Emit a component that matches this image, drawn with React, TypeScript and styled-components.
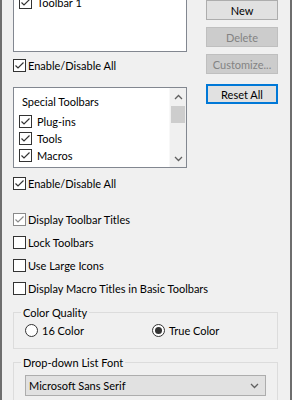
import React from 'react';
import styled, { createGlobalStyle } from 'styled-components';

const Global = createGlobalStyle`
  html, body { margin: 0; padding: 0; background: #f0f0f0; }
  body { font-family: Lato, 'Liberation Sans', sans-serif; font-size: 11px; color: #000; }
  * { box-sizing: border-box; }
`;

const Check = ({ grey }: { grey?: boolean }) => (
  <svg width="11" height="11" viewBox="0 0 11 11">
    <path d="M1.5 5.5 L4 8 L9.5 2.5" fill="none" stroke={grey ? '#8a8a8a' : '#333'} strokeWidth="1.2" />
  </svg>
);

function CheckBox({ checked, grey, label, inList }: { checked?: boolean; grey?: boolean; label: string; inList?: boolean }) {
  return (
    <Row $inList={inList}>
      <Box $grey={grey}>{checked && <Check grey={grey} />}</Box>
      <span>{label}</span>
    </Row>
  );
}

function Radio({ checked, label }: { checked?: boolean; label: string }) {
  return (
    <RadioRow>
      <Circle>{checked && <Dot />}</Circle>
      <span>{label}</span>
    </RadioRow>
  );
}

const Chevron = ({ up }: { up?: boolean }) => (
  <svg width="9" height="6" viewBox="0 0 9 6">
    <path d={up ? 'M1 5 L4.5 1.5 L8 5' : 'M1 1 L4.5 4.5 L8 1'} fill="none" stroke="#606060" strokeWidth="1.3" />
  </svg>
);

export default function App() {
  return (
    <>
      <Global />
      <Window>
        <Top>
          <LeftCol>
            <ListBox $height={84}>
              <ListItems>
                <ListHeader>Toolbars</ListHeader>
                <CheckBox checked inList label="Toolbar 1" />
              </ListItems>
            </ListBox>
            <Spacer $h={7} />
            <CheckBox checked label="Enable/Disable All" />
            <Spacer $h={15} />
            <ListBox $height={81}>
              <ListItems>
                <ListHeader>Special Toolbars</ListHeader>
                <CheckBox checked inList label="Plug-ins" />
                <CheckBox checked inList label="Tools" />
                <CheckBox checked inList label="Macros" />
              </ListItems>
              <ScrollBar>
                <Arrow><Chevron up /></Arrow>
                <Thumb />
                <Track />
                <Arrow><Chevron /></Arrow>
              </ScrollBar>
            </ListBox>
            <Spacer $h={9} />
            <CheckBox checked label="Enable/Disable All" />
          </LeftCol>
          <Buttons>
            <Button>New</Button>
            <Button disabled>Delete</Button>
            <Button disabled>Customize...</Button>
            <Button $focused>Reset All</Button>
          </Buttons>
        </Top>
        <Options>
          <CheckBox checked grey label="Display Toolbar Titles" />
          <CheckBox label="Lock Toolbars" />
          <CheckBox label="Use Large Icons" />
          <CheckBox label="Display Macro Titles in Basic Toolbars" />
        </Options>
        <Group $mt={10} $height={44}>
          <Legend>Color Quality</Legend>
          <RadioLine>
            <Radio label="16 Color" />
            <Radio checked label="True Color" />
          </RadioLine>
        </Group>
        <Group $mt={6} $height={60}>
          <Legend>Drop-down List Font</Legend>
          <Combo>
            <span>Microsoft Sans Serif</span>
            <Chevron />
          </Combo>
        </Group>
      </Window>
    </>
  );
}

const Window = styled.div`
  width: 292px;
  height: 400px;
  overflow: hidden;
  border-left: 2px solid #6e6e6e;
  border-right: 2px solid #6e6e6e;
  padding: 0 12px 0 11px;
`;

const Top = styled.div`
  display: flex;
  gap: 19px;
`;

const LeftCol = styled.div`
  width: 174px;
  display: flex;
  flex-direction: column;
  margin-top: -32px;
`;

const Spacer = styled.div<{ $h: number }>`
  height: ${p => p.$h}px;
  flex-shrink: 0;
`;

const ListBox = styled.div<{ $height: number }>`
  height: ${p => p.$height}px;
  background: #fff;
  border: 1px solid #828790;
  display: flex;
  flex-shrink: 0;
`;

const ListItems = styled.div`
  flex: 1;
  display: flex;
  flex-direction: column;
  gap: 4px;
  padding: 6px 0 0 4px;
`;

const ListHeader = styled.div`
  padding-left: 4px;
  line-height: 16px;
  height: 16px;
  margin-bottom: 1px;
`;

const ScrollBar = styled.div`
  width: 17px;
  display: flex;
  flex-direction: column;
  background: #f0f0f0;
  border-left: 1px solid #f8f8f8;
`;

const Arrow = styled.div`
  height: 17px;
  display: flex;
  align-items: center;
  justify-content: center;
`;

const Thumb = styled.div`
  height: 17px;
  margin: 1px 1px 0;
  background: #cdcdcd;
`;

const Track = styled.div`
  flex: 1;
`;

const Row = styled.div<{ $inList?: boolean }>`
  display: flex;
  align-items: center;
  gap: ${p => (p.$inList ? 5 : 2)}px;
  height: 13px;
  line-height: 13px;
  white-space: nowrap;
  padding-left: ${p => (p.$inList ? 1 : 0)}px;
`;

const Box = styled.div<{ $grey?: boolean }>`
  width: 13px;
  height: 13px;
  flex-shrink: 0;
  border: 1px solid ${p => (p.$grey ? '#8a8a8a' : '#333')};
  background: #fff;
  display: flex;
  align-items: center;
  justify-content: center;
`;

const Buttons = styled.div`
  width: 72px;
  display: flex;
  flex-direction: column;
  gap: 7px;
`;

const Button = styled.button<{ $focused?: boolean }>`
  height: 20px;
  padding: 0;
  font: inherit;
  color: #000;
  background: #e1e1e1;
  border: 1px solid #adadad;
  &:disabled {
    background: #cccccc;
    border-color: #bfbfbf;
    color: #838383;
  }
  ${p => p.$focused && `
    margin-top: 3px;
    border: 2px solid #0078d7;
  `}
`;

const Options = styled.div`
  display: flex;
  flex-direction: column;
  gap: 10px;
  margin-top: 23px;
`;

const Group = styled.fieldset<{ $mt: number; $height: number }>`
  margin: ${p => p.$mt}px 0 0;
  padding: 0 11px;
  width: 265px;
  height: ${p => p.$height}px;
  border: 1px solid #dcdcdc;
  min-width: 0;
`;

const Legend = styled.legend`
  padding: 0 2px;
  margin-left: -4px;
  line-height: 15px;
`;

const RadioLine = styled.div`
  display: grid;
  grid-template-columns: 127px 1fr;
  margin-top: 3px;
`;

const RadioRow = styled.div`
  display: flex;
  align-items: center;
  gap: 4px;
  height: 15px;
  white-space: nowrap;
`;

const Circle = styled.div`
  width: 13px;
  height: 13px;
  border-radius: 50%;
  border: 1px solid #333;
  background: #fff;
  display: flex;
  align-items: center;
  justify-content: center;
`;

const Dot = styled.div`
  width: 7px;
  height: 7px;
  border-radius: 50%;
  background: #333;
`;

const Combo = styled.div`
  margin-top: 5px;
  height: 21px;
  width: 241px;
  background: #e1e1e1;
  border: 1px solid #adadad;
  display: flex;
  align-items: center;
  justify-content: space-between;
  padding: 0 6px 0 3px;
`;
